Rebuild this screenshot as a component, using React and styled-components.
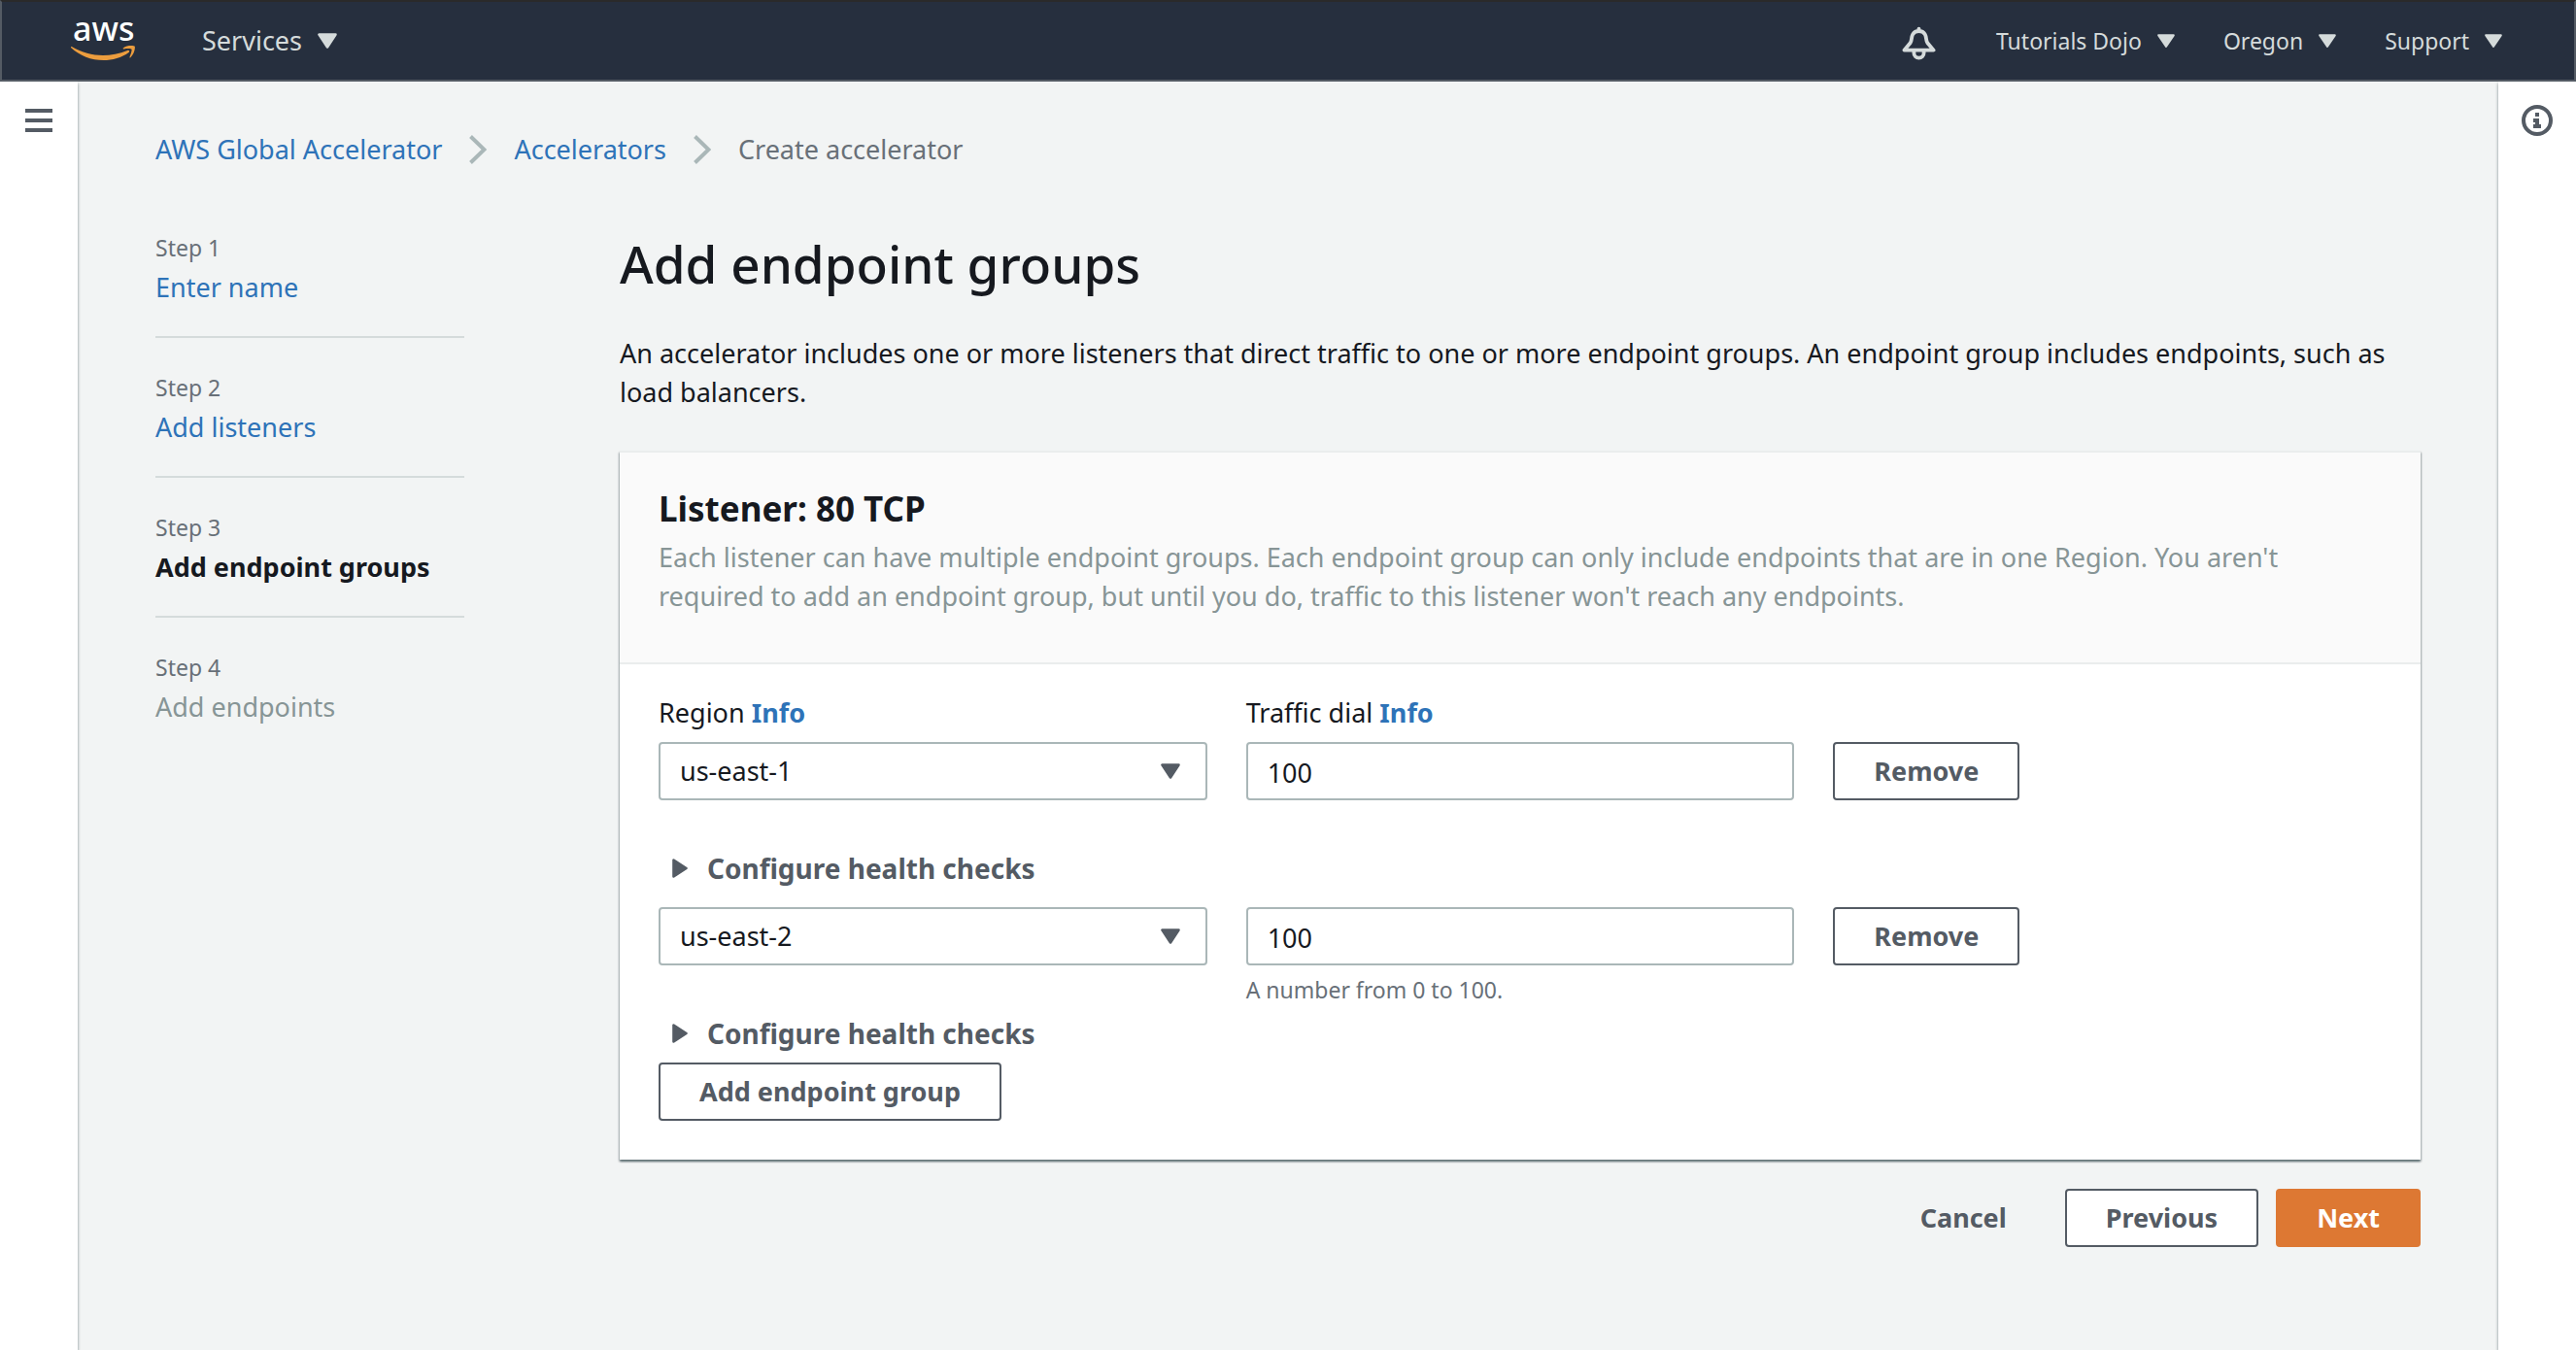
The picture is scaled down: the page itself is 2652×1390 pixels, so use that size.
import React from 'react';
import styled, { createGlobalStyle, css } from 'styled-components';

const color = {
  ink: '#16191f',
  link: '#2e73b8',
  slate: '#545b64',
  muted: '#687078',
  faint: '#879596',
  border: '#aab7b8',
  divider: '#d5dbdb',
  hairline: '#eaeded',
  page: '#f2f4f4',
  nav: '#262f3e',
  navText: '#d5dbdb',
  orange: '#dd7833',
};

const GlobalStyle = createGlobalStyle`
  *, *::before, *::after { box-sizing: border-box; }
  body {
    margin: 0;
    background: #fff;
    color: ${color.ink};
    font-family: "Noto Sans", "Open Sans", sans-serif;
    font-size: 27px;
    line-height: 40px;
  }
  button, input, select { font: inherit; color: inherit; }
  h1, h2, p, ol { margin: 0; padding: 0; }
  ol { list-style: none; }
  a { color: ${color.link}; text-decoration: none; }
  svg { display: block; flex: none; }
`;

const Page = styled.div`
  display: flex;
  flex-direction: column;
  min-height: 100vh;
`;

const TopBar = styled.header`
  position: relative;
  z-index: 1;
  display: flex;
  align-items: center;
  justify-content: space-between;
  height: 84px;
  padding: 0 74px 0 70px;
  background: ${color.nav};
  border: 2px solid ${color.slate};
  border-top-color: #2a2a2a;
`;

const NavGroup = styled.nav`
  display: flex;
  align-items: center;
  gap: ${(p) => p.$gap}px;
`;

const PlainButton = styled.button`
  display: flex;
  align-items: center;
  padding: 0;
  border: 0;
  background: none;
  cursor: pointer;
`;

const MenuButton = styled(PlainButton)`
  gap: 16px;
  color: ${color.navText};
  font-size: ${(p) => (p.$large ? 27 : 23)}px;
`;

const BellButton = styled(PlainButton)`
  padding-top: 6px;
  margin-right: 12px;
`;

const Body = styled.div`
  display: flex;
  flex: 1;
`;

const Rail = styled.aside`
  position: relative;
  display: flex;
  justify-content: center;
  align-items: flex-start;
  flex: none;
  width: 80px;
  padding-top: 24px;
  background: #fff;
  box-shadow: 0 2px 3px rgba(0, 28, 36, 0.5);
`;

const Main = styled.main`
  flex: 1;
  min-width: 0;
  padding: 50px 80px;
  background: ${color.page};
`;

const Breadcrumbs = styled.nav`
  display: flex;
  align-items: center;
  gap: 28px;
  margin-bottom: 62px;
  color: ${color.muted};
`;

const Columns = styled.div`
  display: grid;
  grid-template-columns: 318px minmax(0, 1fr);
  gap: 160px;
  align-items: start;
`;

const Step = styled.li`
  padding-bottom: 30px;

  & + & {
    padding-top: 32px;
    border-top: 2px solid ${color.divider};
  }
`;

const StepNumber = styled.div`
  padding-bottom: 2px;
  color: ${color.muted};
  font-size: 23px;
  line-height: 38px;
`;

const StepName = styled.div`
  color: ${(p) => (p.$current ? color.ink : color.faint)};
  font-weight: ${(p) => (p.$current ? 700 : 400)};
`;

const Title = styled.h1`
  margin-bottom: 36px;
  font-size: 53px;
  font-weight: 500;
  line-height: 72px;
`;

const Card = styled.section`
  margin: 40px 0 30px;
  background: #fff;
  border-top: 2px solid ${color.hairline};
  box-shadow:
    0 2px 2px rgba(0, 28, 36, 0.4),
    1px 2px 2px rgba(0, 28, 36, 0.2),
    -1px 2px 2px rgba(0, 28, 36, 0.2);
`;

const CardHeader = styled.div`
  padding: 36px 40px 48px;
  background: #fafafa;
  border-bottom: 2px solid ${color.hairline};
  color: ${color.faint};
`;

const CardTitle = styled.h2`
  margin-bottom: 8px;
  color: ${color.ink};
  font-size: 35px;
  line-height: 44px;
`;

const CardBody = styled.div`
  display: flex;
  flex-direction: column;
  align-items: stretch;
  padding: 30px 40px 40px;
`;

const Groups = styled.div`
  display: flex;
  flex-direction: column;
  gap: 20px;
  margin-bottom: 10px;
`;

const FieldRow = styled.div`
  display: grid;
  grid-template-columns: repeat(3, minmax(0, 1fr));
  column-gap: 40px;
  align-items: start;
`;

const LabelRow = styled(FieldRow)`
  margin-bottom: 10px;
`;

const InfoLink = styled.a`
  font-weight: 700;
`;

const control = css`
  display: block;
  width: 100%;
  height: 60px;
  border: 2px solid ${color.border};
  border-radius: 4px;
  background: #fff;
`;

const SelectBox = styled.div`
  position: relative;

  svg {
    position: absolute;
    top: 22px;
    right: 28px;
    pointer-events: none;
  }
`;

const Select = styled.select`
  ${control}
  appearance: none;
  padding: 0 60px 0 20px;
`;

const TextInput = styled.input`
  ${control}
  padding: 2px 20px 0;
`;

const Hint = styled.div`
  min-height: 32px;
  margin: 9px 0;
  color: ${color.muted};
  font-size: 23px;
  line-height: 32px;
`;

const Disclosure = styled(PlainButton)`
  gap: 20px;
  padding-left: 14px;
  color: ${color.slate};
  font-size: 28px;
  font-weight: 700;
`;

const variants = {
  normal: css`
    background: #fff;
    border-color: ${color.slate};
    color: ${color.slate};
  `,
  primary: css`
    background: ${color.orange};
    border-color: ${color.orange};
    color: #fff;
  `,
  link: css`
    background: transparent;
    border-color: transparent;
    color: ${color.slate};
  `,
};

const Button = styled.button`
  justify-self: start;
  align-self: flex-start;
  height: 60px;
  padding: 0 40px;
  border: 2px solid;
  border-radius: 4px;
  font-weight: 700;
  white-space: nowrap;
  cursor: pointer;
  ${(p) => variants[p.$variant || 'normal']}
`;

const Actions = styled.div`
  display: flex;
  justify-content: flex-end;
  gap: 18px;
`;

function Caret({ width = 20, height = 16, fill = color.slate }) {
  return (
    <svg width={width} height={height} viewBox="0 0 20 16" preserveAspectRatio="none" aria-hidden="true">
      <path d="M1.5 1.5H18.5L10 14.5Z" fill={fill} stroke={fill} strokeWidth="2.6" strokeLinejoin="round" />
    </svg>
  );
}

function RightArrow() {
  return (
    <svg width="16" height="20" viewBox="0 0 16 20" aria-hidden="true">
      <path d="M1.5 1.5V18.5L14.5 10Z" fill={color.slate} stroke={color.slate} strokeWidth="2.6" strokeLinejoin="round" />
    </svg>
  );
}

function Chevron() {
  return (
    <svg width="18" height="30" viewBox="0 0 18 30" fill="none" aria-hidden="true">
      <path d="M1.5 1.5L15.5 15L1.5 28.5" stroke={color.border} strokeWidth="4" />
    </svg>
  );
}

function AwsLogo() {
  return (
    <svg width="68" height="72" viewBox="0 -14 68 72" role="img" aria-label="aws">
      <text x="3" y="22" fill="#fff" fontSize="34" fontWeight="500" fontFamily="Noto Sans, Open Sans, sans-serif">
        aws
      </text>
      <g fill="#ec9d3e">
        <path d="M1 29C.8 28.2 1.4 27.9 2.2 28.3C12 34 23 37 34 37C42 37 51 35.3 59.2 32C60.9 31.4 62 33 60.6 34C53 39.5 44 42 34.5 42C22 42 10 37.5 1 29Z" />
        <path d="M54.8 29.6C57 27.6 60 27 63 27C65 27 66.5 27.3 66.8 27.8C67.3 29.8 66 36 62.3 39.2C61.7 39.7 61.2 39.4 61.5 38.7C62.6 36 64 32 63.5 30.8C63 29.6 58.5 30 55.5 30.4C54.6 30.5 54.3 30.1 54.8 29.6Z" />
      </g>
    </svg>
  );
}

function Bell() {
  return (
    <svg width="35" height="36" viewBox="0 0 35 36" fill="none" stroke={color.navText} strokeWidth="3.8" strokeLinejoin="round" aria-hidden="true">
      <path d="M2.4 24.6L8.6 17.2C10.6 14 9.4 11.6 11.2 8.4C12.6 6 15 5 17.5 5C20 5 22.4 6 23.8 8.4C25.6 11.6 24.4 14 26.4 17.2L32.6 24.6Z" />
      <path d="M12.4 25V27.6A5.1 5.1 0 0 0 22.6 27.6V25" />
      <circle cx="17.5" cy="2.6" r="1.9" fill={color.navText} stroke="none" />
    </svg>
  );
}

function Hamburger() {
  return (
    <svg width="28" height="32" viewBox="0 0 28 32" fill={color.slate} aria-hidden="true">
      <rect y="4" width="28" height="4" />
      <rect y="14" width="28" height="4" />
      <rect y="24" width="28" height="4" />
    </svg>
  );
}

function InfoIcon() {
  return (
    <svg width="32" height="32" viewBox="0 0 32 32" aria-hidden="true">
      <circle cx="16" cy="16" r="14" fill="none" stroke={color.slate} strokeWidth="4" />
      <path d="M14 8H18V12H14ZM12 14H18V20H20V24H12V20H14V18H12Z" fill={color.slate} />
    </svg>
  );
}

const accountMenus = ['Tutorials Dojo', 'Oregon', 'Support'];

const steps = [
  { name: 'Enter name', visited: true },
  { name: 'Add listeners', visited: true },
  { name: 'Add endpoint groups', current: true },
  { name: 'Add endpoints' },
];

const regions = ['us-east-1', 'us-east-2', 'us-west-1', 'us-west-2'];

const endpointGroups = [
  { id: 'first', region: 'us-east-1', dial: 100 },
  { id: 'second', region: 'us-east-2', dial: 100, hint: 'A number from 0 to 100.' },
];

function EndpointGroup({ group }) {
  return (
    <div>
      <FieldRow>
        <SelectBox>
          <Select id={`region-${group.id}`} aria-label="Region" defaultValue={group.region}>
            {regions.map((r) => (
              <option key={r}>{r}</option>
            ))}
          </Select>
          <Caret />
        </SelectBox>
        <div>
          <TextInput id={`dial-${group.id}`} aria-label="Traffic dial" inputMode="numeric" defaultValue={group.dial} />
          <Hint>{group.hint}</Hint>
        </div>
        <Button type="button">Remove</Button>
      </FieldRow>
      <Disclosure type="button" aria-expanded="false">
        <RightArrow />
        Configure health checks
      </Disclosure>
    </div>
  );
}

export default function App() {
  return (
    <Page>
      <GlobalStyle />
      <TopBar>
        <NavGroup $gap={68}>
          <AwsLogo />
          <MenuButton type="button" $large>
            Services
            <Caret fill={color.navText} />
          </MenuButton>
        </NavGroup>
        <NavGroup $gap={50}>
          <BellButton type="button" aria-label="Notifications">
            <Bell />
          </BellButton>
          {accountMenus.map((name) => (
            <MenuButton key={name} type="button">
              {name}
              <Caret width={18} height={14} fill={color.navText} />
            </MenuButton>
          ))}
        </NavGroup>
      </TopBar>
      <Body>
        <Rail>
          <PlainButton type="button" aria-label="Open navigation">
            <Hamburger />
          </PlainButton>
        </Rail>
        <Main>
          <Breadcrumbs aria-label="Breadcrumb">
            <a href="#global-accelerator">AWS Global Accelerator</a>
            <Chevron />
            <a href="#accelerators">Accelerators</a>
            <Chevron />
            <span>Create accelerator</span>
          </Breadcrumbs>
          <Columns>
            <ol>
              {steps.map((step, i) => (
                <Step key={step.name}>
                  <StepNumber>Step {i + 1}</StepNumber>
                  <StepName $current={step.current}>
                    {step.visited ? <a href={`#step-${i + 1}`}>{step.name}</a> : step.name}
                  </StepName>
                </Step>
              ))}
            </ol>
            <div>
              <Title>Add endpoint groups</Title>
              <p>
                An accelerator includes one or more listeners that direct traffic to one or more endpoint groups. An
                endpoint group includes endpoints, such as load balancers.
              </p>
              <Card>
                <CardHeader>
                  <CardTitle>Listener: 80 TCP</CardTitle>
                  <p>
                    Each listener can have multiple endpoint groups. Each endpoint group can only include endpoints that
                    are in one Region. You aren't required to add an endpoint group, but until you do, traffic to this
                    listener won't reach any endpoints.
                  </p>
                </CardHeader>
                <CardBody>
                  <LabelRow>
                    <div>
                      <label htmlFor="region-first">Region</label> <InfoLink href="#region-info">Info</InfoLink>
                    </div>
                    <div>
                      <label htmlFor="dial-first">Traffic dial</label> <InfoLink href="#dial-info">Info</InfoLink>
                    </div>
                  </LabelRow>
                  <Groups>
                    {endpointGroups.map((group) => (
                      <EndpointGroup key={group.id} group={group} />
                    ))}
                  </Groups>
                  <Button type="button">Add endpoint group</Button>
                </CardBody>
              </Card>
              <Actions>
                <Button type="button" $variant="link">Cancel</Button>
                <Button type="button">Previous</Button>
                <Button type="button" $variant="primary">Next</Button>
              </Actions>
            </div>
          </Columns>
        </Main>
        <Rail>
          <PlainButton type="button" aria-label="Show help panel">
            <InfoIcon />
          </PlainButton>
        </Rail>
      </Body>
    </Page>
  );
}
